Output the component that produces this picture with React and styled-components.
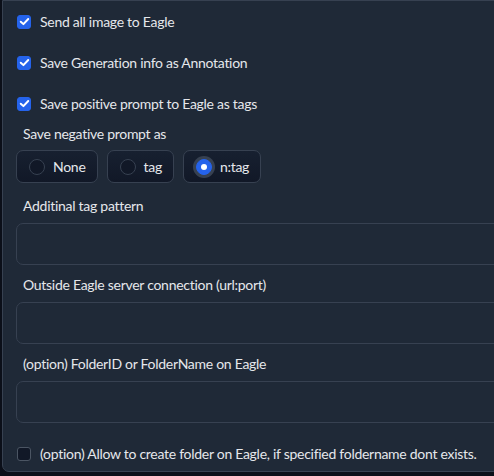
import React from 'react';
import styled, { createGlobalStyle } from 'styled-components';

const Global = createGlobalStyle`
  html, body {
    margin: 0;
    padding: 0;
    background: #0b0f19;
    overflow: hidden;
  }
  body {
    font-family: 'Lato', 'Noto Sans', sans-serif;
    color: #e5e7eb;
    letter-spacing: -0.28px;
  }
`;

const Panel = styled.div`
  margin-left: 2px;
  width: 520px;
  height: 472px;
  box-sizing: border-box;
  background: #1f2937;
  border: 1px solid #374151;
  border-radius: 0 0 0 7px;
  display: flex;
  flex-direction: column;
  overflow: hidden;
`;

const CheckRow = styled.label`
  height: 41px;
  display: flex;
  align-items: center;
  gap: 9px;
  padding-left: 14px;
  font-size: 14px;
  color: #e5e7eb;
  white-space: nowrap;
  flex-shrink: 0;
`;

const Box = styled.span`
  width: 14px;
  height: 14px;
  box-sizing: border-box;
  border-radius: 3px;
  display: flex;
  align-items: center;
  justify-content: center;
  flex-shrink: 0;
  background: ${p => (p.$checked ? '#2563eb' : '#111827')};
  border: 1px solid ${p => (p.$checked ? '#2563eb' : '#4b5563')};
`;

const Field = styled.div`
  display: flex;
  flex-direction: column;
  padding: 0 0 0 13px;
  margin-top: ${p => p.$top || 0}px;
`;

const Label = styled.div`
  height: 20px;
  line-height: 20px;
  padding-left: 7px;
  font-size: 14px;
  color: #e5e7eb;
`;

const RadioRow = styled.div`
  display: flex;
  gap: 9px;
  margin-top: 6px;
`;

const RadioBtn = styled.label`
  height: 33px;
  box-sizing: border-box;
  display: flex;
  align-items: center;
  gap: 8px;
  padding: 0 11px 0 12px;
  border: 1px solid #374151;
  border-radius: 7px;
  background: linear-gradient(to bottom, #172030, #111827);
  font-size: 14px;
  color: #e5e7eb;
`;

const Circle = styled.span`
  width: 16px;
  height: 16px;
  box-sizing: border-box;
  border-radius: 50%;
  display: flex;
  align-items: center;
  justify-content: center;
  background: ${p => (p.$on ? '#2563eb' : '#111827')};
  border: 1px solid ${p => (p.$on ? '#2563eb' : '#374151')};
  box-shadow: ${p => (p.$on ? '0 0 0 3px #374151' : 'none')};
  &::after {
    content: '';
    display: ${p => (p.$on ? 'block' : 'none')};
    width: 6px;
    height: 6px;
    border-radius: 50%;
    background: #fff;
  }
`;

const Input = styled.div`
  margin-top: 7px;
  height: 42px;
  box-sizing: border-box;
  border: 1px solid #374151;
  border-radius: 7px;
  background: #1f2937;
`;

const Check = () => (
  <svg width="11" height="11" viewBox="0 0 10 10">
    <path d="M1.6 5.2 L4 7.4 L8.4 2.7" fill="none" stroke="#fff" strokeWidth="1.8" strokeLinecap="round" strokeLinejoin="round" />
  </svg>
);

const CheckItem = ({ checked, children, top }) => (
  <CheckRow style={top ? { marginTop: top } : undefined}>
    <Box $checked={checked}>{checked && <Check />}</Box>
    {children}
  </CheckRow>
);

export default function App() {
  return (
    <>
      <Global />
      <Panel>
        <CheckItem checked>Send all image to Eagle</CheckItem>
        <CheckItem checked>Save Generation info as Annotation</CheckItem>
        <CheckItem checked>Save positive prompt to Eagle as tags</CheckItem>

        <Field $top={0}>
          <Label>Save negative prompt as</Label>
          <RadioRow>
            <RadioBtn><Circle />None</RadioBtn>
            <RadioBtn><Circle />tag</RadioBtn>
            <RadioBtn><Circle $on />n:tag</RadioBtn>
          </RadioRow>
        </Field>

        <Field $top={13}>
          <Label>Additinal tag pattern</Label>
          <Input />
        </Field>

        <Field $top={10}>
          <Label>Outside Eagle server connection (url:port)</Label>
          <Input />
        </Field>

        <Field $top={10}>
          <Label>(option) FolderID or FolderName on Eagle</Label>
          <Input />
        </Field>

        <CheckItem top={10}>(option) Allow to create folder on Eagle, if specified foldername dont exists.</CheckItem>
      </Panel>
    </>
  );
}
